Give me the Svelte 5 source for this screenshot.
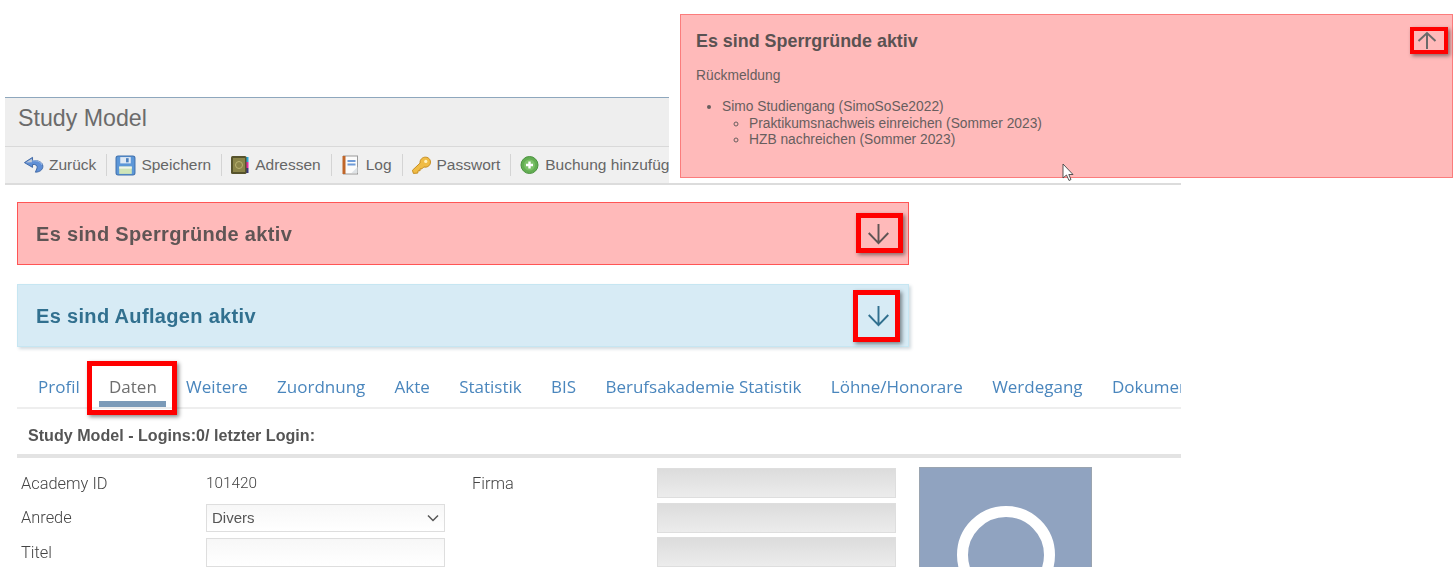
<script>
  const tabs = ['Profil','Daten','Weitere','Zuordnung','Akte','Statistik','BIS','Berufsakademie Statistik','Löhne/Honorare','Werdegang','Dokumente'];
</script>

<div class="page">
  <div class="app">
    <header class="title">Study Model</header>
    <nav class="toolbar">
      <div class="tool">
        <svg width="21" height="20" viewBox="0 0 22 20"><path d="M10 2 L1.500 7.500 L10 12.500 L10 9.500 C13.500 9 15 10.500 14.800 13 L13 17.500 C17.500 17.500 20.800 15 20.800 11.500 C20.800 7 16 5 10 5.300 Z" fill="#5f8fd6" stroke="#3f67a3" stroke-width="1"/><path d="M9.300 3.500 L3 7.500 L9.300 7 Z" fill="#c3cbd6"/><path d="M10 5.500 C15 5.200 19 6.800 20 10" fill="none" stroke="#a9c4ea" stroke-width="1"/></svg>
        <span>Zurück</span>
      </div>
      <div class="tool">
        <svg width="21" height="21" viewBox="0 0 20 20"><rect x="1" y="1" width="18" height="18" rx="2" fill="#5c97d8" stroke="#3f70ac"/><rect x="5" y="2" width="10" height="6" fill="#dfe9f4"/><rect x="10.500" y="3" width="2.500" height="4" fill="#4c80bd"/><rect x="4" y="11" width="12" height="7" fill="#cfe5b8"/><rect x="4" y="11" width="12" height="2" fill="#f0f5e8"/></svg>
        <span>Speichern</span>
      </div>
      <div class="tool">
        <svg width="20" height="20" viewBox="0 0 20 20"><rect x="16" y="2" width="2.500" height="5" fill="#2aa7d8"/><rect x="16" y="7" width="2.500" height="6" fill="#e02aa0"/><rect x="16" y="13" width="2.500" height="5" fill="#3a3a7a"/><rect x="1" y="1" width="15.500" height="18" rx="1.500" fill="#56532c"/><rect x="3" y="3" width="12" height="14" fill="#8a8448"/><circle cx="9" cy="10" r="3.500" fill="none" stroke="#b9b270" stroke-width="1"/></svg>
        <span>Adressen</span>
      </div>
      <div class="tool">
        <svg width="21" height="20" viewBox="0 0 18 20"><rect x="2" y="1" width="14" height="18" fill="#fbfbfb" stroke="#9a9a9a"/><rect x="1" y="1" width="3" height="18" fill="#c0662a"/><rect x="6" y="5" width="8" height="2" fill="#6f9bd8"/><rect x="6" y="8.500" width="8" height="2" fill="#6f9bd8"/><path d="M10 18 L16 12 V18 Z" fill="#dfe3e6"/></svg>
        <span>Log</span>
      </div>
      <div class="tool">
        <svg width="21" height="20" viewBox="0 0 22 20"><path d="M1.500 15.500 L9.500 8 C9 4.500 12 1.500 15.500 1.800 C19 2 20.800 5 20.300 8 C19.800 11 16.500 13 13.500 12 L11.500 14 L9.500 14 L9.500 16 L7.500 16 L7 18.500 L2.500 18.800 Z" fill="#f0bc45" stroke="#c48a1c" stroke-width="1"/><circle cx="15.500" cy="6.300" r="1.700" fill="#fff2c2"/></svg>
        <span>Passwort</span>
      </div>
      <div class="tool">
        <svg width="21" height="20" viewBox="0 0 20 20"><circle cx="10" cy="10" r="8.500" fill="#63ae52" stroke="#4b9240"/><circle cx="10" cy="10" r="5.500" fill="#7cc069"/><path d="M10 6.500 V13.500 M6.500 10 H13.500" stroke="#fff" stroke-width="2.400"/></svg>
        <span>Buchung hinzufügen</span>
      </div>
    </nav>
  </div>
  <div class="rule"></div>

  <main class="content">
    <section class="alert red"><h2>Es sind Sperrgründe aktiv</h2>
      <svg class="arrow" width="23" height="23" viewBox="0 0 24 24"><path d="M12 2 V22 M1.800 11.500 L12 22 L22.200 11.500" fill="none" stroke="currentColor" stroke-width="2"/></svg>
    </section>
    <section class="alert blue"><h2>Es sind Auflagen aktiv</h2>
      <svg class="arrow" width="23" height="23" viewBox="0 0 24 24"><path d="M12 2 V22 M1.800 11.500 L12 22 L22.200 11.500" fill="none" stroke="currentColor" stroke-width="2"/></svg>
    </section>

    <div class="tabs">
      {#each tabs as t, i}
        <span class="tab" class:active={i === 1}>{t}</span>
      {/each}
    </div>

    <div class="sub">Study Model - Logins:0/ letzter Login:</div>

    <div class="form">
      <div class="col">
        <div class="row"><label for="a">Academy ID</label><span id="a" class="val">101420</span></div>
        <div class="row"><label for="b">Anrede</label>
          <div id="b" class="input select">Divers
            <svg width="12" height="8" viewBox="0 0 12 8"><path d="M1 1.500 L6 6.500 L11 1.500" fill="none" stroke="#555" stroke-width="1.500"/></svg>
          </div>
        </div>
        <div class="row"><label for="c">Titel</label><div id="c" class="input"></div></div>
      </div>
      <div class="col firma">
        <div class="row"><label for="d">Firma</label><div id="d" class="input dis"></div></div>
        <div class="row"><span class="lab"></span><div class="input dis"></div></div>
        <div class="row"><span class="lab"></span><div class="input dis"></div></div>
      </div>
      <div class="avatar"><div class="ring"></div></div>
    </div>
  </main>

  <!-- overlays: pasted panel, annotations -->
  <aside class="panel">
    <h3>Es sind Sperrgründe aktiv</h3>
    <p>Rückmeldung</p>
    <ul>
      <li>Simo Studiengang (SimoSoSe2022)
        <ul>
          <li>Praktikumsnachweis einreichen (Sommer 2023)</li>
          <li>HZB nachreichen (Sommer 2023)</li>
        </ul>
      </li>
    </ul>
    <svg class="uparrow" width="20" height="20" viewBox="0 0 20 20"><path d="M10 18 V2 M1.500 10 L10 2 L18.500 10" fill="none" stroke="#6a6a6a" stroke-width="2"/></svg>
    <div class="mark m0"></div>
    <svg class="cursor" width="13" height="19" viewBox="0 0 13 19"><path d="M1 1 V15 L4.500 12 L7 17.500 L9 16.500 L6.800 11.500 L11 11.500 Z" fill="#fff" stroke="#444" stroke-width="0.900"/></svg>
  </aside>
  <div class="mark m1"></div>
  <div class="mark m2"></div>
  <div class="mark m3"></div>
</div>

<style>
  :global(body) { margin: 0; background: #fff; }
  .page { position: relative; width: 1455px; height: 569px; overflow: hidden; padding-top: 97px; box-sizing: border-box; font-family: "Liberation Sans", sans-serif; color: #555; filter: blur(0.4px); }
  .app { margin-left: 5px; width: 664px; overflow: hidden; }
  .title { height: 50px; box-sizing: border-box; background: #eeeeee; border-top: 1px solid #8ea7bd; border-bottom: 1px solid #d9d9d9; padding: 6px 0 0 13px; font-size: 23.2px; line-height: 28px; color: #6b6b6b; }
  .toolbar { height: 36px; background: #f0f0f0; display: flex; align-items: center; padding-left: 18px; white-space: nowrap; font-size: 15.5px; color: #666; }
  .tool { display: flex; align-items: center; gap: 5px; height: 22px; padding-right: 10px; margin-right: 8px; border-right: 1px solid #d4d4d4; flex: none; }
  .tool:last-child { border: 0; }
  .rule { height: 2px; width: 1176px; margin-left: 5px; background: #dcdcdc; }
  .content { width: 1164px; margin-left: 17px; padding-top: 17px; }
  .alert { height: 63px; box-sizing: border-box; width: 892px; display: flex; align-items: center; justify-content: space-between; padding: 0 18px 0 18px; border: 1px solid; margin-bottom: 19px; }
  .alert h2 { margin: 1px 0 0; font-size: 20px; line-height: 24px; font-weight: 700; letter-spacing: 0.33px; }
  .red { background: #ffbaba; border-color: #ff5555; color: #5f5555; }
  .blue { background: #d7ebf5; border-color: #c6e6f2; color: #31708f; box-shadow: 2px 2px 3px rgba(80,110,130,.25); }
  .arrow { display: block; }
  .tabs { display: flex; gap: 29.3px; height: 43px; box-sizing: border-box; padding: 10px 0 0 21px; border-bottom: 2px solid #eee; font-family: "Open Sans", sans-serif; font-size: 17px; line-height: 22px; color: #4a86bd; white-space: nowrap; overflow: hidden; }
  .tab { position: relative; flex: none; }
  .active { color: #6e6e6e; }
  .active::after { content: ""; position: absolute; left: -10px; right: -9px; top: 25px; height: 6px; background: #7b9ab8; }
  .sub { height: 49px; box-sizing: border-box; padding: 17px 0 0 11px; border-bottom: 4px solid #e3e3e3; font-size: 16.1px; font-weight: 700; color: #555; line-height: 18px; }
  .form { display: flex; padding-top: 10px; font-family: Roboto, sans-serif; font-size: 16.4px; font-weight: 300; color: #444; }
  .col { display: flex; flex-direction: column; gap: 4.6px; }
  .row { display: flex; align-items: center; height: 30px; }
  .row label, .lab { width: 189px; padding-left: 4px; box-sizing: border-box; }
  .firma { margin-left: 23px; }
  .val { font-size: 15.3px; }
  .input { width: 239px; height: 29px; box-sizing: border-box; border: 1px solid #dedede; background: linear-gradient(#f7f7f7, #fff); display: flex; align-items: center; justify-content: space-between; padding: 0 5px; font-family: "Liberation Sans", sans-serif; font-size: 15px; font-weight: 400; color: #555; }
  .select { height: 28px; }
  .input.dis { height: 30px; background: linear-gradient(#dcdcdc, #ececec); }
  .avatar { position: relative; width: 173px; height: 100px; margin: -1px 0 0 23px; background: #90a3c0; border: 1px solid #9aa4b0; border-bottom: 0; box-sizing: border-box; overflow: hidden; }
  .ring { position: absolute; left: 37px; top: 38px; width: 76px; height: 76px; border: 11px solid #fff; border-radius: 50%; }

  .panel { position: absolute; left: 680px; top: 14px; width: 773px; height: 164px; box-sizing: border-box; border: 1px solid #fb7c7c; background: #ffbaba; padding: 16px 15px; color: #685e5e; font-size: 13.8px; }
  .panel h3 { margin: 0; font-size: 17.9px; line-height: 20px; color: #5a5252; }
  .panel p { margin: 17px 0 0; line-height: 16px; }
  .panel ul { margin: 0; padding: 0 0 0 26px; list-style: disc; line-height: 16.6px; }
  .panel > ul { margin-top: 15px; }
  .panel ul ul { list-style: circle; padding-left: 27px; }
  .uparrow { position: absolute; right: 15px; top: 16px; }
  .cursor { position: absolute; left: 381px; top: 148px; }
  .mark { position: absolute; border: 5px solid #f00; box-sizing: border-box; box-shadow: 2px 2px 4px rgba(0,0,0,.45); }
  .m0 { left: 728.500px; top: 12.300px; width: 38px; height: 27px; border-width: 4px; }
  .m1 { left: 856px; top: 213px; width: 47px; height: 40px; }
  .m2 { left: 853px; top: 289.500px; width: 46.500px; height: 52px; }
  .m3 { left: 87px; top: 361px; width: 90px; height: 54px; }
</style>
